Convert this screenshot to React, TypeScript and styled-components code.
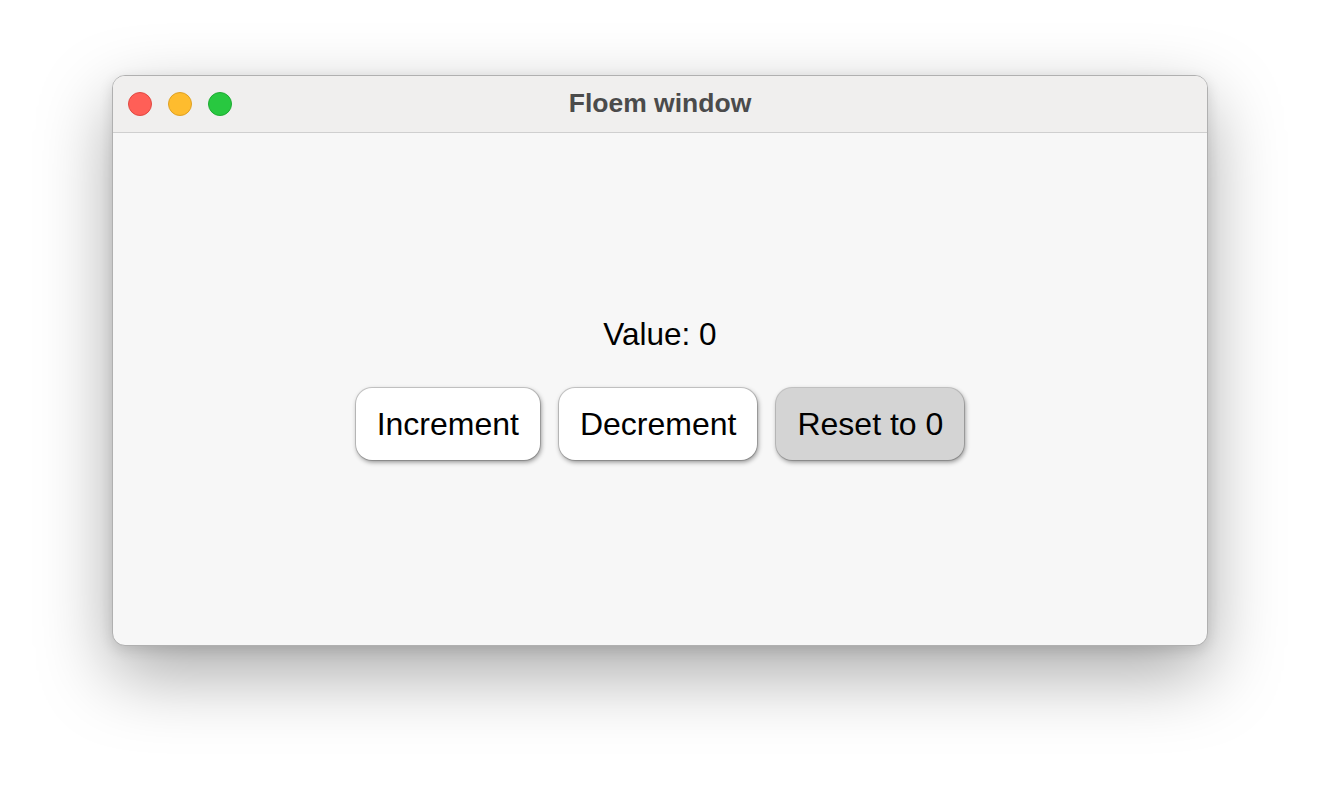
import React, { useState } from "react";
import styled, { createGlobalStyle } from "styled-components";

const GlobalStyle = createGlobalStyle`
  html, body {
    margin: 0;
    padding: 0;
    background: #ffffff;
    font-family: "Liberation Sans", Arial, Helvetica, sans-serif;
  }
`;

const Page = styled.div`
  width: 1320px;
  height: 794px;
  box-sizing: border-box;
  padding-top: 75px;
  display: flex;
  justify-content: center;
  align-items: flex-start;
`;

const Window = styled.div`
  width: 1096px;
  height: 571px;
  box-sizing: border-box;
  border-radius: 13px;
  overflow: hidden;
  display: flex;
  flex-direction: column;
  background: #f7f7f7;
  border: 1px solid #b0b0b0;
  box-shadow: 0 28px 72px rgba(0, 0, 0, 0.34), 0 4px 14px rgba(0, 0, 0, 0.12);
`;

const TitleBar = styled.div`
  position: relative;
  height: 56px;
  flex: none;
  display: flex;
  align-items: center;
  justify-content: center;
  background: #f0efee;
  border-bottom: 1px solid #cfcfcf;
`;

const Lights = styled.div`
  position: absolute;
  left: 15px;
  top: 16px;
  display: flex;
  gap: 16px;
`;

const Light = styled.span<{ $fill: string; $edge: string }>`
  width: 24px;
  height: 24px;
  border-radius: 50%;
  box-sizing: border-box;
  background: ${(p) => p.$fill};
  border: 1px solid ${(p) => p.$edge};
`;

const Title = styled.div`
  font-size: 26.5px;
  font-weight: 700;
  color: #4b4b4b;
  margin-top: -1px;
`;

const Content = styled.div`
  flex: 1;
  display: flex;
  flex-direction: column;
  align-items: center;
  justify-content: center;
  padding-bottom: 2px;
`;

const ValueLabel = styled.div`
  font-size: 31.5px;
  line-height: 36px;
  color: #000;
  margin-bottom: 36px;
`;

const Row = styled.div`
  display: flex;
  gap: 19px;
`;

const Button = styled.button<{ $muted?: boolean }>`
  height: 72px;
  padding: 0 21px;
  border: none;
  border-radius: 16px;
  font-family: "Liberation Sans", Arial, Helvetica, sans-serif;
  font-size: 32px;
  color: #000;
  background: ${(p) => (p.$muted ? "#d4d4d4" : "#ffffff")};
  box-shadow: 0 0 0 1px rgba(0, 0, 0, 0.16), 1px 2px 5px rgba(0, 0, 0, 0.45);
  cursor: pointer;
`;

export default function App() {
  const [value, setValue] = useState(0);
  return (
    <>
      <GlobalStyle />
      <Page>
        <Window>
          <TitleBar>
            <Lights>
              <Light $fill="#ff5f57" $edge="#e14942" />
              <Light $fill="#febc2e" $edge="#dfa123" />
              <Light $fill="#28c840" $edge="#1eab32" />
            </Lights>
            <Title>Floem window</Title>
          </TitleBar>
          <Content>
            <ValueLabel>Value: {value}</ValueLabel>
            <Row>
              <Button onClick={() => setValue((v) => v + 1)}>Increment</Button>
              <Button onClick={() => setValue((v) => v - 1)}>Decrement</Button>
              <Button $muted onClick={() => setValue(0)}>
                Reset to 0
              </Button>
            </Row>
          </Content>
        </Window>
      </Page>
    </>
  );
}
